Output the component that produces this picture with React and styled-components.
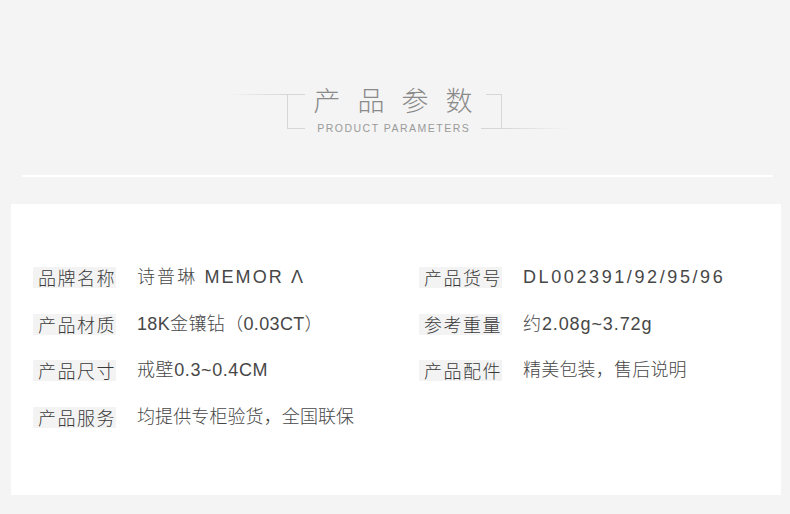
import React from 'react';
import styled, { createGlobalStyle } from 'styled-components';

const GlobalStyle = createGlobalStyle`
	body {
		margin: 0;
		background: #f4f4f4;
		font-family: "Noto Sans CJK SC", "Noto Sans", sans-serif;
	}
`;

const Page = styled.div`
	width: 790px;
	height: 514px;
	padding-top: 94px;
	box-sizing: border-box;
	overflow: hidden;
`;

const HeaderRow = styled.div`
	display: flex;
	justify-content: center;
	height: 35px;
	padding-left: 7px;
`;

const FadeLine = styled.div`
	width: ${props => props.$width}px;
	height: 1px;
	align-self: ${props => props.$side === 'left' ? 'flex-start' : 'flex-end'};
	background: linear-gradient(
		${props => props.$side === 'left' ? 'to right' : 'to left'},
		rgba(214, 214, 214, 0),
		#d6d6d6
	);
`;

const LeftBracket = styled.div`
	width: 18px;
	box-sizing: border-box;
	border: 1px solid #d6d6d6;
	border-right: none;
`;

const RightBracket = styled.div`
	position: relative;
	width: 21px;
	box-sizing: border-box;
	border-right: 1px solid #d6d6d6;
	border-bottom: 1px solid #d6d6d6;

	&::before {
		content: '';
		position: absolute;
		top: 0;
		left: 5px;
		right: 0;
		height: 1px;
		background: #d6d6d6;
	}
`;

const TitleBlock = styled.div`
	width: 176px;
	margin-top: -10px;
	display: flex;
	flex-direction: column;
	align-items: center;
`;

const Title = styled.h1`
	margin: 0 -17px 0 0;
	font-size: 27px;
	line-height: 32px;
	font-weight: 300;
	letter-spacing: 17px;
	color: #8a8a8a;
`;

const SubTitle = styled.div`
	margin: 6px -1.5px 0 0;
	font-family: "Liberation Sans", Arial, sans-serif;
	font-size: 10.5px;
	line-height: 12px;
	letter-spacing: 1.5px;
	color: #9a9a9a;
`;

const Divider = styled.div`
	height: 2px;
	margin: 46px 17px 0 22px;
	background: #ffffff;
`;

const Card = styled.div`
	width: 770px;
	height: 291px;
	margin: 27px 0 0 11px;
	padding: 63px 0 0 22px;
	box-sizing: border-box;
	background: #ffffff;
`;

const ParamGrid = styled.div`
	display: grid;
	grid-template-columns: 386px 1fr;
	grid-auto-rows: 21px;
	row-gap: 25.7px;
`;

const ParamItem = styled.div`
	display: flex;
	align-items: center;
	gap: 21px;
`;

const Label = styled.span`
	width: 83px;
	height: 21px;
	padding-left: 5px;
	box-sizing: border-box;
	background: #f3f3f3;
	font-size: 18px;
	line-height: 21px;
	font-weight: 300;
	letter-spacing: 1.5px;
	white-space: nowrap;
	color: #3a3a3a;
`;

const Value = styled.span`
	font-family: "Liberation Sans", "Noto Sans CJK SC", sans-serif;
	font-size: 18px;
	line-height: 21px;
	font-weight: 300;
	letter-spacing: ${props => props.$spacing}px;
	white-space: nowrap;
	color: #474747;
`;

const params = [
	['品牌名称', '诗普琳 MEMOR Λ', 2.1],
	['产品货号', 'DL002391/92/95/96', 2.6],
	['产品材质', '18K金镶钻（0.03CT）', 0.35],
	['参考重量', '约2.08g~3.72g', 0.9],
	['产品尺寸', '戒壁0.3~0.4CM', 0.6],
	['产品配件', '精美包装，售后说明', 0.2],
	['产品服务', '均提供专柜验货，全国联保', 0.1],
];

export default function App() {
	return (
		<Page>
			<GlobalStyle />
			<HeaderRow>
				<FadeLine $side="left" $width={60} />
				<LeftBracket />
				<TitleBlock>
					<Title>产品参数</Title>
					<SubTitle>PRODUCT PARAMETERS</SubTitle>
				</TitleBlock>
				<RightBracket />
				<FadeLine $side="right" $width={68} />
			</HeaderRow>
			<Divider />
			<Card>
				<ParamGrid>
					{params.map(([label, value, spacing]) => (
						<ParamItem key={label}>
							<Label>{label}</Label>
							<Value $spacing={spacing}>{value}</Value>
						</ParamItem>
					))}
				</ParamGrid>
			</Card>
		</Page>
	);
}
